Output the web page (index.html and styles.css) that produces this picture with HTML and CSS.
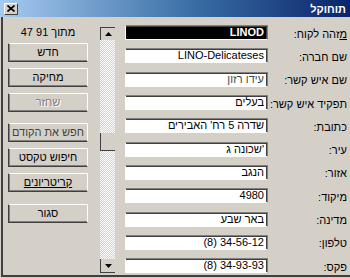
FILE: index.html
```
<!DOCTYPE html>
<html lang="he" dir="rtl">
<head>
    <meta charset="UTF-8">
    <title>לקוחות</title>
    <link rel="stylesheet" href="styles.css">
</head>
<body>
    <div class="window">
        <div class="titlebar">
            <span class="title">לקוחות</span>
            <span class="close">
                <svg viewBox="0 0 8 7" width="8" height="7">
                    <path d="M0.5 0.5 L7.5 6.5 M7.5 0.5 L0.5 6.5" stroke="#000" stroke-width="1.6"/>
                </svg>
            </span>
        </div>

        <div class="main">
            <!-- טופס פרטי לקוח -->
            <div class="form">
                <label><u>מ</u>זהה לקוח:</label>
                <div class="field selected">LINOD</div>

                <label>שם חברה:</label>
                <div class="field">LINO-Delicateses</div>

                <label>שם איש קשר:</label>
                <div class="field soft">עידו רזון</div>

                <label>תפקיד איש קשר:</label>
                <div class="field">בעלים</div>

                <label>כתובת:</label>
                <div class="field">שדרה 5 רח' האבירים</div>

                <label>עיר:</label>
                <div class="field">'שכונה ג</div>

                <label>אזור:</label>
                <div class="field">הנגב</div>

                <label>מיקוד:</label>
                <div class="field">4980</div>

                <label>מדינה:</label>
                <div class="field">באר שבע</div>

                <label>טלפון:</label>
                <div class="field ltr">(8) 34-56-12</div>

                <label>פקס:</label>
                <div class="field ltr">(8) 34-93-93</div>
            </div>

            <div class="scroll">
                <div class="sb-btn sb-up">
                    <svg viewBox="0 0 7 4" width="7" height="4"><path d="M3.5 0 L7 4 L0 4 Z" fill="#000"/></svg>
                </div>
                <div class="sb-thumb"></div>
                <div class="sb-track"></div>
                <div class="sb-btn sb-down">
                    <svg viewBox="0 0 7 4" width="7" height="4"><path d="M0 0 L7 0 L3.5 4 Z" fill="#000"/></svg>
                </div>
            </div>

            <!-- כפתורי פעולה -->
            <div class="side">
                <div class="counter">מתוך 91 47</div>
                <button class="btn first">חדש</button>
                <button class="btn">מחיקה</button>
                <button class="btn disabled">שחזר</button>
                <button class="btn dim gap">חפש את הקודם</button>
                <button class="btn">חיפוש טקסט</button>
                <button class="btn"><u>קריטריונים</u></button>
                <button class="btn gap-lg">סגור</button>
            </div>
        </div>
    </div>
</body>
</html>
```

FILE: styles.css
```
* {
    margin: 0;
    padding: 0;
    box-sizing: border-box;
}

body {
    background: #d4d0c8;
}

.window {
    width: 350px;
    height: 278px;
    background: #d4d0c8;
    font-family: "Liberation Sans", "DejaVu Sans", sans-serif;
    font-size: 11px;
    color: #000;
    overflow: hidden;
}

.titlebar {
    height: 17px;
    display: flex;
    align-items: center;
    justify-content: space-between;
    padding: 0 4px 0 4px;
    background: linear-gradient(to left, #0a246a 0%, #3a6ea5 45%, #a6caf0 100%);
}

.title {
    color: #fff;
    font-weight: bold;
    direction: ltr;
    unicode-bidi: bidi-override;
}

.close {
    width: 14px;
    height: 12px;
    display: flex;
    align-items: center;
    justify-content: center;
    background: #d4d0c8;
    border: 1px solid;
    border-color: #fff #404040 #404040 #fff;
}

.main {
    display: flex;
    height: 260px;
    margin-left: 1px;
    border-left: 2px solid #404040;
    border-bottom: 2px solid #404040;
}

.form {
    width: 223px;
    margin-right: 2px;
    padding-top: 4px;
    display: grid;
    grid-template-columns: 80px 143px;
    grid-auto-rows: 23.3px;
    align-content: start;
}

.form label {
    align-self: center;
    padding: 2px 1px 0 0;
    white-space: nowrap;
}

.field {
    align-self: center;
    height: 15px;
    padding: 0 3px;
    line-height: 13px;
    background: #fff;
    border: 1px solid;
    border-color: #808080 #808080 #fff #fff;
    box-shadow: inset -1px 1px 0 #404040;
    white-space: nowrap;
    overflow: hidden;
}

.field.selected {
    background: #000;
    color: #fff;
    font-weight: bold;
}

.field.soft {
    color: #444;
}

.field.ltr {
    direction: ltr;
    text-align: right;
}

.scroll {
    width: 15px;
    height: 246px;
    margin: 10px 10px 0 12px;
    display: flex;
    flex-direction: column;
    background: repeating-conic-gradient(#fff 0 25%, #d4d0c8 0 50%) 0 0 / 2px 2px;
}

.sb-btn {
    height: 13px;
    display: flex;
    align-items: center;
    justify-content: center;
    background: #d4d0c8;
    border-left: 1px solid #404040;
}

.sb-up {
    border-top: 1px solid #404040;
}

.sb-down {
    height: 14px;
    border-bottom: 1px solid #404040;
}

.sb-thumb {
    height: 18px;
    margin-top: 93px;
    background: #d4d0c8;
    border-left: 1px solid #404040;
    border-bottom: 1px solid #404040;
}

.sb-track {
    flex: 1;
}

.side {
    width: 80px;
    padding-top: 9px;
    display: flex;
    flex-direction: column;
}

.counter {
    line-height: 13px;
    text-align: center;
}

.btn {
    height: 19px;
    margin-top: 6px;
    font: inherit;
    color: #000;
    line-height: 17px;
    text-align: center;
    background: #d4d0c8;
    border: 1px solid;
    border-color: #fff #fff #404040 #404040;
    box-shadow: inset 1px -1px 0 #808080;
}

.btn.first {
    margin-top: 4px;
}

.btn.gap {
    margin-top: 11px;
}

.btn.gap-lg {
    margin-top: 12px;
}

.btn.disabled {
    color: #808080;
    text-shadow: 1px 1px 0 #fff;
}

.btn.dim {
    color: #404040;
}
```
